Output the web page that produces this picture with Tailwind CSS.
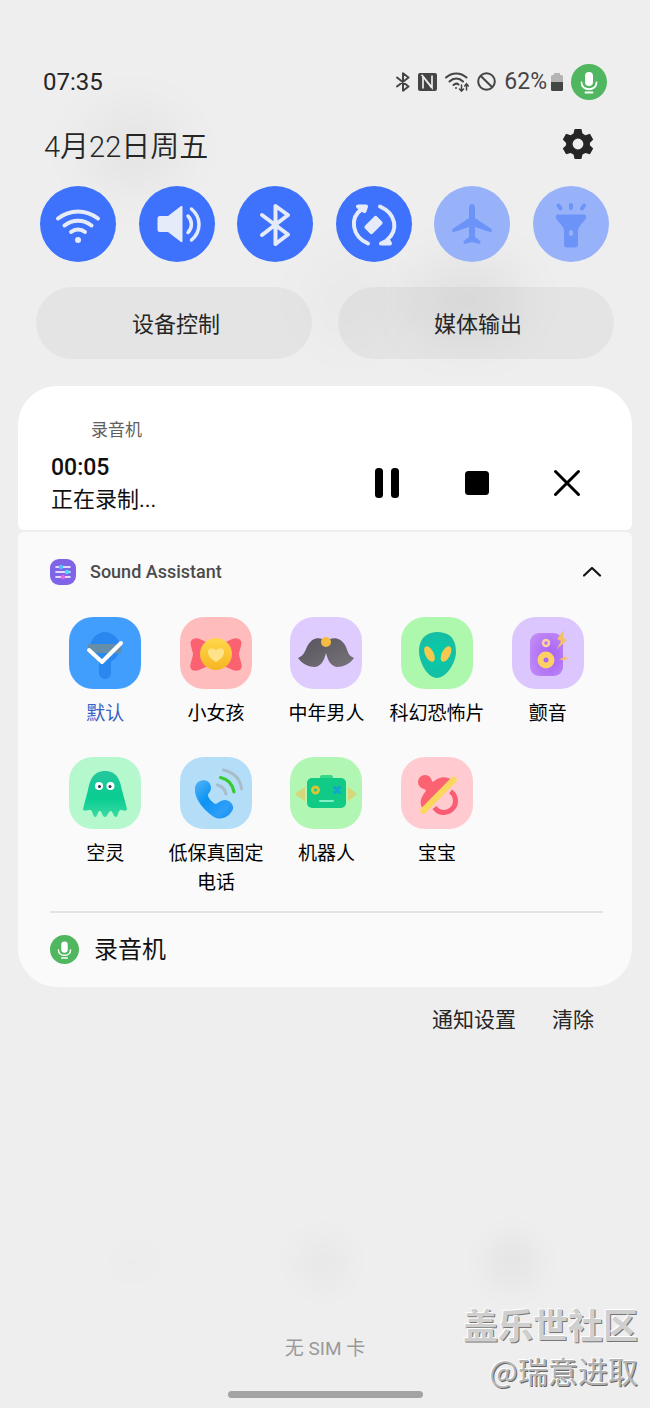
<!DOCTYPE html>
<html lang="zh-CN">
<head>
    <meta charset="UTF-8">
    <meta name="viewport" content="width=device-width, initial-scale=1.0">
    <title>通知面板</title>
    <script src="https://cdn.jsdelivr.net/npm/@tailwindcss/browser@4"></script>
</head>
<body class="bg-[#eeeeee] font-[Roboto,'Noto_Sans_CJK_SC',sans-serif] text-[#252525]">
    <div class="relative isolate flex min-h-screen flex-col overflow-hidden">

        <!-- 背景模糊光斑 -->
        <div class="absolute -z-10 left-[85px] top-[110px] h-20 w-24 rounded-full bg-black/4 blur-xl"></div>
        <div class="absolute -z-10 left-[310px] top-[250px] h-24 w-20 rounded-full bg-black/2 blur-xl"></div>
        <div class="absolute -z-10 left-[410px] top-[260px] h-20 w-28 rounded-full bg-black/5 blur-xl"></div>
        <div class="absolute -z-10 left-[118px] top-[1246px] h-8 w-8 rounded-full bg-black/1 blur-md"></div>
        <div class="absolute -z-10 left-[295px] top-[1234px] h-14 w-14 rounded-full bg-black/2 blur-md"></div>
        <div class="absolute -z-10 left-[484px] top-[1234px] h-14 w-14 rounded-full bg-black/3 blur-md"></div>

        <!-- 状态栏 -->
        <header class="flex h-[100px] items-end justify-between px-[43px]">
            <div class="flex h-9 items-center text-2xl">07:35</div>
            <div class="flex h-9 items-center gap-2 text-[#454545]">
                <svg class="h-5 w-[14px]" viewBox="0 0 14 20" fill="none" stroke="currentColor" stroke-width="2" stroke-linecap="round" stroke-linejoin="round"><path d="M1 5.500l11.500 9L7 18.700V1.300l5.500 4.200L1 14.500"/></svg>
                <svg class="h-5 w-[19px]" viewBox="0 0 19 20"><rect y="1" width="19" height="18" rx="2" fill="currentColor"/><path d="M5 16.500V4.500l8.500 11M5 4.500L3.500 3M14 3.500v12L5.500 5" fill="none" stroke="#eee" stroke-width="1.700"/></svg>
                <svg class="h-6 w-6" viewBox="0 0 24 24" fill="none" stroke="currentColor" stroke-width="2" stroke-linecap="round"><path d="M1 7.500c6-5.500 14.500-5.500 20.500 0M4.500 11.500c4-4 9.500-4 13.500 0M8.500 15c2-1.800 3.500-1.800 5-.5"/><circle cx="11" cy="18" r="1" fill="currentColor" stroke="none"/><path d="M16.500 15v6m-2-2l2 2.200 2-2.200M21.500 20v-6m-1.800 2l1.800-2.200 1.800 2.200" stroke-width="1.500"/></svg>
                <svg class="h-5 w-[19px]" viewBox="0 0 19 20" fill="none" stroke="currentColor" stroke-width="2"><circle cx="9.500" cy="9.500" r="8.300"/><path d="M3.500 3.700l12 11.800"/></svg>
                <div class="flex items-center gap-1">
                    <span class="text-[23px] leading-9">62%</span>
                    <svg class="h-5 w-3" viewBox="0 0 12 20"><path d="M3 1h6v2h1.500Q12 3 12 4.500V10H0V4.500Q0 3 1.500 3H3z" fill="#b4b4b4"/><path d="M0 10h12v7.500q0 1.500-1.500 1.500h-9Q0 19 0 17.500z" fill="currentColor"/></svg>
                </div>
                <svg class="h-9 w-9" viewBox="0 0 36 36"><circle cx="18" cy="18" r="18" fill="#50b760"/><rect x="14" y="8" width="8" height="14" rx="4" fill="#fff"/><path d="M10.500 18.500c0 9 15 9 15 0M14.500 28.500h7" fill="none" stroke="#fff" stroke-width="1.800" stroke-linecap="round"/></svg>
            </div>
        </header>

        <!-- 日期 -->
        <div class="mt-[26px] flex items-start justify-between pl-11 pr-14">
            <h1 class="text-[29px] font-[360] leading-[42px]">4月22日周五</h1>
            <button type="button" aria-label="设置" class="pt-0.5">
                <svg class="h-8 w-8" viewBox="0 0 32 32"><path d="M12.600 1h6.800l1.100 4.500 2.900 1.700 4.500-1.400 3.300 5.800-3.300 3.300v2.300l3.300 3.300-3.300 5.800-4.500-1.400-2.900 1.700-1.100 4.400h-6.800l-1.100-4.400-2.900-1.700-4.500 1.400-3.300-5.800 3.300-3.300v-2.300L.8 11.600l3.300-5.800 4.500 1.400 2.900-1.700zM16 10.600a5.400 5.400 0 1 0 0 10.800 5.400 5.400 0 1 0 0-10.800z" fill="#252525" fill-rule="evenodd"/></svg>
            </button>
        </div>

        <!-- 快捷开关 -->
        <div class="mt-[18px] flex justify-between pl-10 pr-[41px] text-[#e6ebfa]">
            <button type="button" aria-label="WLAN" class="h-[76px] w-[76px] rounded-full bg-[#3e72fd]">
                <svg viewBox="0 0 76 76" fill="none" stroke="currentColor" stroke-width="4" stroke-linecap="round"><path d="M18 32.500c12-9.500 28-9.500 40 0M24.500 39.500c8-6.500 19-6.500 27 0M31 46c4-3.500 10-3.500 14 0"/><circle cx="38" cy="54" r="3" fill="currentColor" stroke="none"/></svg>
            </button>
            <button type="button" aria-label="声音" class="h-[76px] w-[76px] rounded-full bg-[#3e72fd]">
                <svg viewBox="0 0 76 76" fill="none" stroke="currentColor" stroke-width="3.500" stroke-linecap="round"><path d="M21 30h8l13-10q1.500-.5 1.500 1v34q0 1.500-1.500 1L29 46h-8q-2.500 0-2.500-2.500v-11Q18.500 30 21 30z" fill="currentColor" stroke="none"/><path d="M49 30c4.500 4.500 4.500 12 0 16.500M52.500 23c10 8.500 10 22.500 0 31"/></svg>
            </button>
            <button type="button" aria-label="蓝牙" class="h-[76px] w-[76px] rounded-full bg-[#3e72fd]">
                <svg viewBox="0 0 76 76" fill="none" stroke="currentColor" stroke-width="4" stroke-linecap="round" stroke-linejoin="round"><path d="M25 29l26 19.500L38.500 58V20L51 29 25 49"/></svg>
            </button>
            <button type="button" aria-label="自动旋转" class="h-[76px] w-[76px] rounded-full bg-[#3e72fd]">
                <svg viewBox="0 0 76 76" fill="none" stroke="currentColor" stroke-width="4" stroke-linecap="round" stroke-linejoin="round"><path d="M32 57.500C16 50.500 13 32 26 23M22 20.500h8l-1.500 4.500zM44 20.500C60 27.500 63 44 51 54M54 57.500h-9l7-3.500z"/><rect x="32" y="30.500" width="11" height="17" rx="2" transform="rotate(45 37.500 39)" fill="currentColor" stroke="none"/></svg>
            </button>
            <button type="button" aria-label="飞行模式" class="h-[76px] w-[76px] rounded-full bg-[#97b2f8] text-[#6c93f8]">
                <svg viewBox="0 0 76 76" fill="currentColor"><path d="M38 18q3 0 3 5v9l16.500 11q1.500 3-1.500 3L41 41v10l5.500 4.500q.5 2.500-2 2.200L38 56l-6.500 1.700q-2.500.3-2-2.200L35 51V41l-15 5q-3 0-1.500-3L35 32v-9q0-5 3-5z"/></svg>
            </button>
            <button type="button" aria-label="手电筒" class="h-[76px] w-[76px] rounded-full bg-[#97b2f8] text-[#6c93f8]">
                <svg viewBox="0 0 76 76"><path d="M24.500 28.500h27q2 0 1.700 2.500-.5 2.500-5.200 7.500-3 3.500-3 6V58q0 3.500-3 3.500h-8q-3 0-3-3.500V44.500q0-2.500-3-6-4.700-5-5.200-7.500-.3-2.500 1.700-2.500z" fill="currentColor"/><rect x="36" y="44" width="4" height="6" rx="2" fill="#97b2f8"/><path d="M25.500 19.500l2 3M38 19v3M51 19.500l-2 3" stroke="currentColor" stroke-width="4" stroke-linecap="round"/></svg>
            </button>
        </div>

        <div class="mt-[25px] grid grid-cols-2 gap-[26px] px-9 text-[22px]">
            <button type="button" class="h-[72px] rounded-full bg-black/4 pl-1 pt-0.5">设备控制</button>
            <button type="button" class="h-[72px] rounded-full bg-black/4 pl-1 pt-0.5">媒体输出</button>
        </div>

        <!-- 通知卡片 -->
        <main class="mt-[27px] flex flex-col gap-[2px] px-[18px]">
            <section class="flex h-36 items-center justify-between rounded-t-[39px] rounded-b-md bg-white pl-[33px] pr-[49px] text-[#101010]">
                <div class="pt-5">
                    <div class="pl-10 text-[17px] leading-6 text-[#606060]">录音机</div>
                    <div class="mt-3 text-[23px] font-medium leading-7">00:05</div>
                    <div class="text-[22px] leading-9">正在录制...</div>
                </div>
                <div class="mt-[50px] flex gap-[58px] text-black">
                    <button type="button" aria-label="暂停"><svg class="h-8 w-8" viewBox="0 0 32 32"><rect x="4" y="1" width="8" height="30" rx="3.500"/><rect x="20" y="1" width="8" height="30" rx="3.500"/></svg></button>
                    <button type="button" aria-label="停止"><svg class="h-8 w-8" viewBox="0 0 32 32"><rect x="4" y="4" width="24" height="24" rx="3.500"/></svg></button>
                    <button type="button" aria-label="关闭"><svg class="h-8 w-8" viewBox="0 0 32 32" stroke="currentColor" stroke-width="3" stroke-linecap="round"><path d="M4.500 4.500l23 23M27.500 4.500l-23 23"/></svg></button>
                </div>
            </section>

            <section class="rounded-t-md rounded-b-[39px] bg-[#fafafa] pb-0.5 pl-8 pr-[29px] pt-6 text-[#101010]">
                <div class="flex h-8 items-center gap-[14px]">
                    <svg class="h-[26px] w-[26px]" viewBox="0 0 26 26"><rect width="26" height="26" rx="9" fill="#8064e8"/><path d="M6 8h14M6 13h14M6 18h14" stroke="#fff" stroke-width="1.600" stroke-linecap="round"/><circle cx="11" cy="8" r="2.200" fill="#4cc3fa"/><circle cx="17" cy="13" r="2.200" fill="#4cdcfa"/><circle cx="13" cy="18" r="2.200" fill="#ee62e8"/></svg>
                    <h2 class="flex-1 text-lg font-medium text-[#4b4b4b]">Sound Assistant</h2>
                    <button type="button" aria-label="收起"><svg class="h-5 w-5" viewBox="0 0 20 20" fill="none" stroke="#151515" stroke-width="2.200" stroke-linecap="round" stroke-linejoin="round"><path d="M1 13.500L9 6l8 7.500"/></svg></button>
                </div>

                <div class="mt-[29px] grid grid-cols-5 items-start gap-y-[29px] text-[19px] leading-[29px] text-black">
                    <button type="button" class="flex flex-col items-center gap-[10px] text-[#3963c4]">
                        <svg class="h-[72px] w-[72px] rounded-3xl bg-[#429efd]" viewBox="0 0 72 72"><path d="M36 15a15.500 15.500 0 0 1 6 29.500V56a6 6 0 0 1-12 0V44.500A15.500 15.500 0 0 1 36 15z" fill="#2a87ef"/><rect x="19" y="27" width="34" height="9" fill="#658fa9"/><path d="M20 33l13 12 19-19" fill="none" stroke="#fff" stroke-width="4" stroke-linecap="round" stroke-linejoin="round"/></svg>
                        <span>默认</span>
                    </button>
                    <button type="button" class="flex flex-col items-center gap-[10px]">
                        <svg class="h-[72px] w-[72px] rounded-3xl bg-[#ffbcbc]" viewBox="0 0 72 72">
                            <defs><linearGradient id="gold" x2="0" y2="1"><stop stop-color="#ffd84a"/><stop offset="1" stop-color="#f6b522"/></linearGradient></defs>
                            <path d="M13 22c6-3 11 4 23 6 12-2 17-9 23-6 5 3 1 8 0 15 1 8 5 12 1 16-6 3-12-4-24-6-12 2-18 9-24 6-4-4 0-8 1-16-1-7-5-12 0-15z" fill="#fb6271"/><circle cx="36" cy="37" r="16" fill="url(#gold)"/><path d="M36 45c-5-3-8-6-8-10 0-4 5-5 8-1.500 3-3.500 8-2.500 8 1.500 0 4-3 7-8 10z" fill="#ffe38a"/>
                        </svg>
                        <span>小女孩</span>
                    </button>
                    <button type="button" class="flex flex-col items-center gap-[10px]">
                        <svg class="h-[72px] w-[72px] rounded-3xl bg-[#dfccff]" viewBox="0 0 72 72">
                            <defs><linearGradient id="hair" x2="1" y2="1"><stop stop-color="#57535c"/><stop offset="1" stop-color="#77747a"/></linearGradient></defs>
                            <path d="M36 24c-7-5-14-3-18 4-3 5-3 10-10 13 4 6 11 9 17 9 6-1 9-6 11-14 2 8 5 13 11 14 6 0 13-3 17-9-7-3-6-8-9-13-4-7-12-9-19-4z" fill="url(#hair)"/><circle cx="36" cy="25" r="5" fill="#f4bd42"/>
                        </svg>
                        <span>中年男人</span>
                    </button>
                    <button type="button" class="flex flex-col items-center gap-[10px]">
                        <svg class="h-[72px] w-[72px] rounded-3xl bg-[#adf8ad]" viewBox="0 0 72 72">
                            <defs><radialGradient id="alien"><stop stop-color="#04cda9"/><stop offset="1" stop-color="#16bea4"/></radialGradient></defs>
                            <path d="M30 16q6-2 13 0c9 2 12 10 12 19 0 11-10 26-19 26S18 46 18 34c0-9 4-16 12-18z" fill="url(#alien)"/><ellipse cx="28.500" cy="37" rx="4.200" ry="8.500" transform="rotate(-27 28.500 37)" fill="#f6c84d"/><ellipse cx="45" cy="37" rx="4.200" ry="8.500" transform="rotate(27 45 37)" fill="#f6c84d"/>
                        </svg>
                        <span>科幻恐怖片</span>
                    </button>
                    <button type="button" class="flex flex-col items-center gap-[10px]">
                        <svg class="h-[72px] w-[72px] rounded-3xl bg-[#dcc6fe]" viewBox="0 0 72 72">
                            <defs><radialGradient id="box" cx=".6" cy=".55" r=".7"><stop stop-color="#a55ef6"/><stop offset="1" stop-color="#c18df6"/></radialGradient></defs>
                            <rect x="18" y="16" width="33" height="43" rx="9" fill="url(#box)"/><circle cx="34" cy="26" r="3" fill="none" stroke="#fbd0a0" stroke-width="2.500"/><circle cx="34" cy="43" r="5.500" fill="none" stroke="#fbd064" stroke-width="6"/><path d="M52 13l-7 9 4 2-4 8 10-9-4-2zM47 42l4-1 1-3 1 2.500 4 0-5 3z" fill="#f3c163"/>
                        </svg>
                        <span>颤音</span>
                    </button>
                    <button type="button" class="flex flex-col items-center gap-[10px]">
                        <svg class="h-[72px] w-[72px] rounded-3xl bg-[#b5f8ce]" viewBox="0 0 72 72">
                            <defs><linearGradient id="ghost" x2="0" y2="1"><stop stop-color="#24c79e"/><stop offset=".6" stop-color="#09cd91"/><stop offset="1" stop-color="#3bdba4"/></linearGradient></defs>
                            <path d="M36 14c12 0 15 9 17 19l5 19c0 3-5 1-7 1-2 2-2 7-4 7-3 0-3-6-5-6-3 0-3 6-6 6s-3-6-5-6c-3 0-2 6-5 6-2 0-2-5-4-7-3 0-8 2-8-1l5-19c2-10 5-19 17-19z" fill="url(#ghost)"/><circle cx="30" cy="29" r="4" fill="#fff"/><circle cx="41.500" cy="29" r="4" fill="#fff"/><circle cx="30.500" cy="29.500" r="1.500" fill="#34304c"/><circle cx="41" cy="29.500" r="1.500" fill="#34304c"/>
                        </svg>
                        <span>空灵</span>
                    </button>
                    <button type="button" class="flex flex-col items-center gap-[10px]">
                        <svg class="h-[72px] w-[72px] rounded-3xl bg-[#b4def8]" viewBox="0 0 72 72">
                            <defs><linearGradient id="call" x2="1" y2="1"><stop stop-color="#55b5f6"/><stop offset=".4" stop-color="#0c93f3"/><stop offset=".75" stop-color="#2e9ff8"/><stop offset="1" stop-color="#168cf0"/></linearGradient></defs>
                            <path d="M17 26c5-5 14-3 14 5 0 4-4 6-3 8 1 3 4 6 7 8 3 0 5-4 10-4 7 1 10 7 7 11-3 5-9 9-16 7C26 56 14 42 15 32q0-4 2-6z" fill="url(#call)"/><g fill="none" stroke-width="3.200" stroke-linecap="round"><path d="M37.500 28q7 2 8.500 9M43.500 13Q60 17 61.500 32" stroke="#a9bdc9"/><path d="M40.500 20.500Q52 23 54 35" stroke="#37cb2f"/></g>
                        </svg>
                        <span>低保真固定电话</span>
                    </button>
                    <button type="button" class="flex flex-col items-center gap-[10px]">
                        <svg class="h-[72px] w-[72px] rounded-3xl bg-[#b2f6b4]" viewBox="0 0 72 72">
                            <path d="M15 30v14l-9-6q-1-1 0-2zM58 30v14l8-6q1-1 0-2z" fill="#d6d778"/><rect x="30" y="18" width="13" height="8" rx="2" fill="#37d68c"/><rect x="17" y="21" width="39" height="30" rx="5" fill="#10ca86"/><circle cx="25.500" cy="33" r="3" fill="none" stroke="#d5c533" stroke-width="3"/><path d="M44.500 30.500l5 5m0-5l-5 5" stroke="#13a3d2" stroke-width="3" stroke-linecap="round"/><path d="M30 44h13" stroke="#84eec5" stroke-width="2" stroke-linecap="round"/>
                        </svg>
                        <span>机器人</span>
                    </button>
                    <button type="button" class="flex flex-col items-center gap-[10px]">
                        <svg class="h-[72px] w-[72px] rounded-3xl bg-[#ffcbd1]" viewBox="0 0 72 72">
                            <path d="M33.500 50.500a11.500 11.500 0 1 0 16-16" fill="none" stroke="#f95c73" stroke-width="5"/><circle cx="24" cy="25" r="7" fill="#fb6372"/><path d="M22 52c-4-5-3-11 3-18l-4-5 8-7 3 3c6-6 14-6 19-2z" fill="#fb6372"/><path d="M22.500 53.500l30-30.500" stroke="#fcd75e" stroke-width="6.500" stroke-linecap="round"/>
                        </svg>
                        <span>宝宝</span>
                    </button>
                </div>

                <hr class="mt-[14px] border-t-2 border-[#e3e3e3]">
                <div class="flex h-[72px] items-center gap-[15px]">
                    <svg class="h-[29px] w-[29px]" viewBox="0 0 36 36"><circle cx="18" cy="18" r="18" fill="#50b760"/><rect x="14" y="8" width="8" height="14" rx="4" fill="#fff"/><path d="M10.500 18.500c0 9 15 9 15 0M14.500 28.500h7" fill="none" stroke="#fff" stroke-width="1.800" stroke-linecap="round"/></svg>
                    <span class="pt-0.5 text-2xl">录音机</span>
                </div>
            </section>
        </main>

        <div class="mt-[14px] flex h-10 items-center justify-end gap-9 pr-14 text-[21px]">
            <button type="button">通知设置</button>
            <button type="button">清除</button>
        </div>

        <!-- 底部 -->
        <footer class="mt-auto flex flex-col items-center gap-7 pb-[10px]">
            <div class="text-[19px] leading-7 text-[#999999]">无 SIM 卡</div>
            <div class="h-[7px] w-[30%] rounded-full bg-[#a3a3a3]"></div>
        </footer>

        <!-- 水印 -->
        <div class="absolute bottom-[15px] right-3 text-right font-['Noto_Sans_CJK_SC',sans-serif]">
            <div class="text-[35px] font-bold leading-[46px] text-[#cfcfcf] [text-shadow:-1px_-1px_0_#fff,1px_1px_0_#777]">盖乐世社区</div>
            <div class="text-[30px] leading-[46px] text-[#b4b4b4] [text-shadow:-1px_-1px_0_#fff,1px_1px_0_#666]">@瑞意进取</div>
        </div>
    </div>
</body>
</html>
